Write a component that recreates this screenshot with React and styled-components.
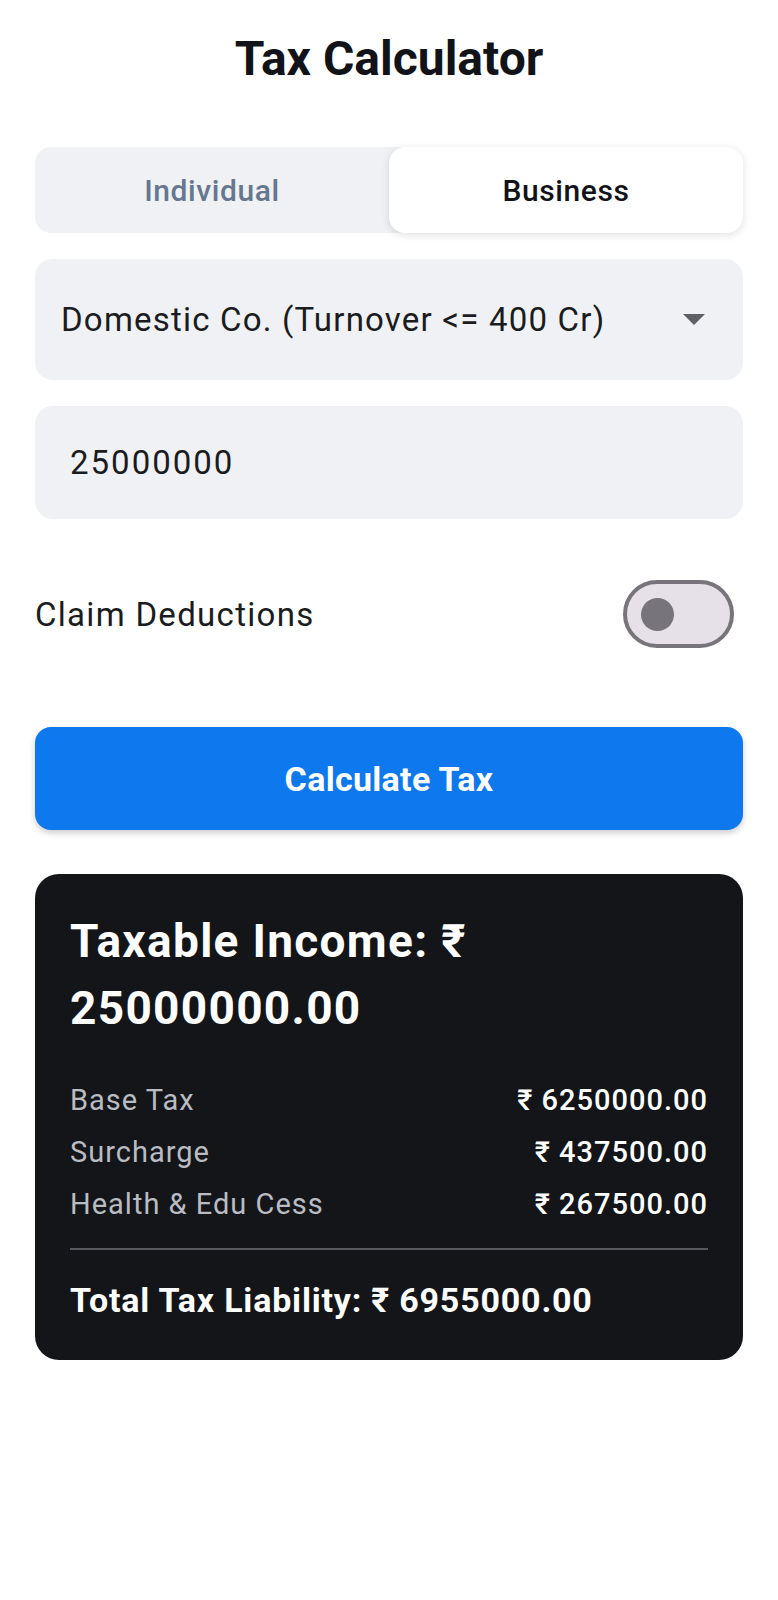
import React, { useState } from 'react'
import styled, { createGlobalStyle } from 'styled-components'

const GlobalStyle = createGlobalStyle`
  body {
    margin: 0;
    background: #ffffff;
    font-family: Roboto, "Noto Sans", sans-serif;
    color: #111318;
  }
`

const Page = styled.div`
  padding: 24px 35px 40px;
  display: flex;
  flex-direction: column;
`

const Title = styled.h1`
  margin: 0;
  text-align: center;
  font-size: 48px;
  font-weight: 700;
  line-height: 70px;
  color: #111318;
`

const Segmented = styled.div`
  margin-top: 53px;
  display: flex;
  height: 86px;
  background: #f0f1f5;
  border-radius: 16px;
`

const Segment = styled.button`
  flex: 1;
  border: none;
  border-radius: 16px;
  font-family: inherit;
  font-size: 30px;
  letter-spacing: 0.6px;
  font-weight: 500;
  background: ${p => (p.active ? '#ffffff' : 'transparent')};
  color: ${p => (p.active ? '#111318' : '#66778f')};
  box-shadow: ${p => (p.active ? '0 2px 8px rgba(0,0,0,0.12)' : 'none')};
`

const Field = styled.div`
  display: flex;
  align-items: center;
  justify-content: space-between;
  background: #f0f1f5;
  border-radius: 18px;
  height: ${p => p.h}px;
  margin-top: ${p => p.mt}px;
  padding: 0 38px 0 ${p => p.pl}px;
  box-sizing: border-box;
  font-size: 33px;
  letter-spacing: ${p => p.ls}px;
  color: #1a1c20;
`

const Caret = styled.span`
  width: 0;
  height: 0;
  border-left: 11px solid transparent;
  border-right: 11px solid transparent;
  border-top: 11px solid #5f6065;
`

const ToggleRow = styled.div`
  margin-top: 61px;
  display: flex;
  align-items: center;
  justify-content: space-between;
  padding-right: 9px;
  font-size: 33px;
  letter-spacing: 1.3px;
  color: #1a1c20;
`

const Switch = styled.div`
  width: 111px;
  height: 68px;
  box-sizing: border-box;
  border: 4px solid #77747b;
  border-radius: 34px;
  background: #e6e0e8;
  display: flex;
  align-items: center;
  padding-left: 14px;
`

const Thumb = styled.span`
  width: 33px;
  height: 33px;
  border-radius: 50%;
  background: #77747b;
`

const CalcButton = styled.button`
  margin-top: 79px;
  height: 103px;
  border: none;
  border-radius: 16px;
  background: #0e78ee;
  color: #ffffff;
  font-family: inherit;
  font-size: 34px;
  letter-spacing: 0.3px;
  font-weight: 700;
  box-shadow: 0 3px 6px rgba(0,0,0,0.2);
`

const ResultCard = styled.div`
  margin-top: 44px;
  background: #131519;
  border-radius: 24px;
  padding: 34px 35px 35px;
  color: #ffffff;
`

const ResultTitle = styled.div`
  font-size: 46px;
  letter-spacing: 1.3px;
  font-weight: 700;
  line-height: 67px;
`

const Rows = styled.div`
  margin-top: 32px;
  display: flex;
  flex-direction: column;
`

const Row = styled.div`
  display: flex;
  justify-content: space-between;
  font-size: 29px;
  letter-spacing: 1px;
  line-height: 52px;
`

const Label = styled.span`
  color: #b9bcc2;
`

const Value = styled.span`
  color: #ffffff;
  font-weight: 500;
`

const Divider = styled.div`
  height: 2px;
  background: #55585d;
  margin: 18px 0 25px;
`

const Total = styled.div`
  font-size: 34px;
  letter-spacing: 0.8px;
  font-weight: 700;
  line-height: 50px;
`

const rows = [
  ['Base Tax', '₹ 6250000.00'],
  ['Surcharge', '₹ 437500.00'],
  ['Health & Edu Cess', '₹ 267500.00'],
]

export default function App() {
  const [mode, setMode] = useState('Business')
  return (
    <Page>
      <GlobalStyle />
      <Title>Tax Calculator</Title>
      <Segmented>
        {['Individual', 'Business'].map(m => (
          <Segment key={m} active={mode === m} onClick={() => setMode(m)}>{m}</Segment>
        ))}
      </Segmented>
      <Field h={121} mt={26} pl={26} ls={1.2}>
        <span>Domestic Co. (Turnover &lt;= 400 Cr)</span>
        <Caret />
      </Field>
      <Field h={113} mt={26} pl={35} ls={2}>25000000</Field>
      <ToggleRow>
        <span>Claim Deductions</span>
        <Switch><Thumb /></Switch>
      </ToggleRow>
      <CalcButton>Calculate Tax</CalcButton>
      <ResultCard>
        <ResultTitle>Taxable Income: ₹<br />25000000.00</ResultTitle>
        <Rows>
          {rows.map(([l, v]) => (
            <Row key={l}><Label>{l}</Label><Value>{v}</Value></Row>
          ))}
        </Rows>
        <Divider />
        <Total>Total Tax Liability: ₹ 6955000.00</Total>
      </ResultCard>
    </Page>
  )
}
